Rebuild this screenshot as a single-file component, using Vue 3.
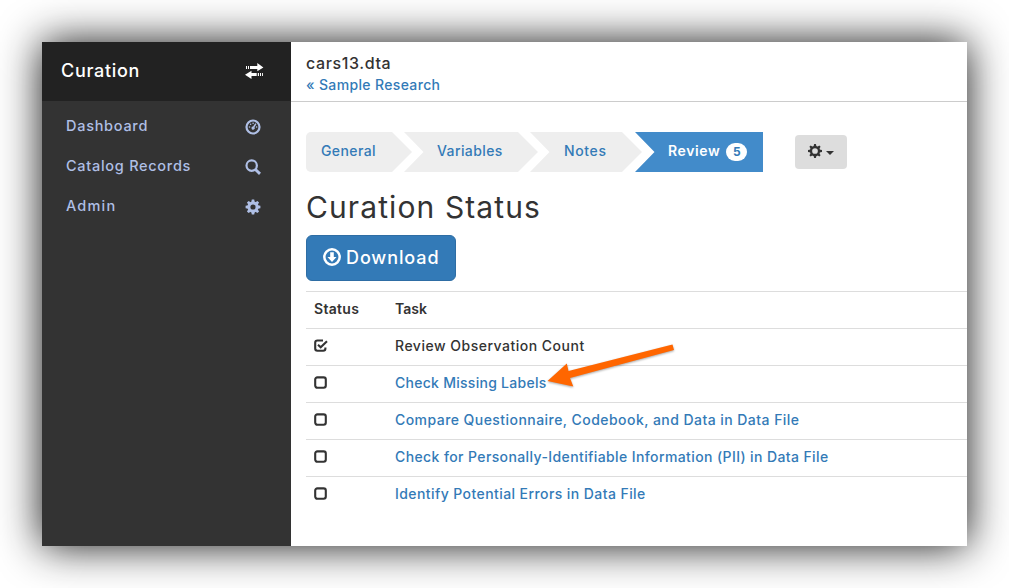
<script setup>
const nav = [
  { label: 'Dashboard', icon: 'dashboard', fit: 'f-dash' },
  { label: 'Catalog Records', icon: 'search', fit: 'f-cat' },
  { label: 'Admin', icon: 'cog', fit: 'f-admin' },
]
const steps = [
  { label: 'General', cls: 'general' },
  { label: 'Variables', cls: 'variables' },
  { label: 'Notes', cls: 'notes' },
  { label: 'Review', cls: 'review', count: 5 },
]
const tasks = [
  { label: 'Review Observation Count', done: true, fit: 't1' },
  { label: 'Check Missing Labels', fit: 't2' },
  { label: 'Compare Questionnaire, Codebook, and Data in Data File', fit: 't3' },
  { label: 'Check for Personally-Identifiable Information (PII) in Data File', fit: 't4' },
  { label: 'Identify Potential Errors in Data File', fit: 't5' },
]
const teeth = [0, 45, 90, 135, 180, 225, 270, 315]
</script>

<template>
  <div class="page">
    <div class="window">
      <aside class="sidebar">
        <div class="brand">
          <span class="brand-name">Curation</span>
          <svg class="transfer" width="19" height="16" viewBox="0 0 19 16">
            <path fill="#fff" d="M1 3h1v3H1zM3 3h1v3H3zM5 3h7.3V0L18.4 4.4 12.3 8.3V6H5zM6.5 7.7v2.4h5.2v3H6.5v2.8L0 11.7zM12.8 10.1H14v3h-1.2zM15 10.1h1v3h-1zM17 10.1h.9v3H17z" />
          </svg>
        </div>
        <nav>
          <a v-for="n in nav" :key="n.label" class="nav-item">
            <span :class="n.fit">{{ n.label }}</span>
            <svg width="16" height="16" viewBox="0 0 16 16">
              <g v-if="n.icon === 'dashboard'" fill="#afbfe5">
                <circle cx="8" cy="8" r="6.5" fill="none" stroke="#afbfe5" stroke-width="2.2" />
                <circle cx="4.5" cy="8" r=".8" /><circle cx="5.6" cy="5.3" r=".8" />
                <circle cx="8.1" cy="4.2" r=".8" /><circle cx="11.6" cy="8" r=".8" />
                <path d="M10.3 4.2l1.2.7-2 3.4a1.6 1.6 0 1 1-1.4-.8z" />
              </g>
              <g v-else-if="n.icon === 'search'" fill="none" stroke="#afbfe5">
                <circle cx="6.7" cy="6.6" r="5.2" stroke-width="2.2" />
                <path d="M10.2 10.3l4.8 4.6" stroke-width="2.9" />
              </g>
              <g v-else>
                <circle cx="8" cy="8" r="4.1" fill="none" stroke="#afbfe5" stroke-width="3" />
                <path v-for="t in teeth" :key="t" fill="#afbfe5" d="M6.2 3.4L6.8.6h2.4l.6 2.8z" :transform="`rotate(${t} 8 8)`" />
              </g>
            </svg>
          </a>
        </nav>
      </aside>
      <main>
        <header>
          <div class="file"><span>cars13.dta</span></div>
          <a class="back">« Sample Research</a>
        </header>
        <section class="content">
          <div class="toolbar">
            <div class="steps">
              <a v-for="s in steps" :key="s.label" class="step" :class="s.cls">
                <span>{{ s.label }}</span><b v-if="s.count" class="badge">{{ s.count }}</b>
              </a>
            </div>
            <button class="gear">
              <svg width="14" height="14" viewBox="0 0 14 14">
                <circle cx="7" cy="7" r="4" fill="none" stroke="#333" stroke-width="2.3" />
                <path v-for="t in teeth" :key="t" fill="#333" d="M5.6 2.6L6.1 0h1.8l.5 2.6z" :transform="`rotate(${t} 7 7)`" />
              </svg>
              <i class="caret"></i>
            </button>
          </div>
          <h1>Curation Status</h1>
          <button class="download">
            <svg width="18" height="18" viewBox="0 0 18 18">
              <circle cx="9" cy="9" r="7.7" fill="none" stroke="#fff" stroke-width="2.5" />
              <path d="M7.2 4.3h3.6v4.6h2.7L9 14 4.5 8.9h2.7z" fill="#fff" />
            </svg>
            <span>Download</span>
          </button>
          <div class="table">
            <div class="row head"><span class="c1"><span class="status">Status</span></span><span class="c2">Task</span></div>
            <div v-for="t in tasks" :key="t.label" class="row">
              <span class="c1">
                <svg width="14" height="14" viewBox="0 0 14 14" fill="none" stroke="#333" stroke-width="2.1">
                  <template v-if="t.done">
                    <path d="M9 1.5H3.4Q1.2 1.5 1.2 3.7v5.9q0 2.2 2.2 2.2h5.8q2.2 0 2.2-2.2V8.6" />
                    <path d="M4 5.7l2.7 2.6 6.3-6" />
                  </template>
                  <rect v-else x="1.2" y="1.4" width="10.6" height="10.4" rx="2.2" />
                </svg>
              </span>
              <span class="c2"><span :class="[t.fit, { link: !t.done }]">{{ t.label }}</span></span>
            </div>
          </div>
        </section>
      </main>
    </div>
    <svg class="pointer" width="140" height="56" viewBox="0 0 140 56">
      <path fill="#ff6600" d="M7.5 41L26.8 23.5 28.5 31 132.5 4.5 134 10 30 38 33.3 46.5z" />
    </svg>
  </div>
</template>

<style>
html, body { margin: 0; background: #fff; overflow: hidden; }
</style>
<style scoped>
.page { box-sizing: border-box; width: 1009px; height: 588px; padding: 42px; position: relative; overflow: hidden;
  font-family: Inter, "Open Sans", sans-serif; font-size: 14px; font-weight: 500; line-height: 20px; color: #333; white-space: nowrap; }
.window { width: 925px; height: 504px; display: flex; background: #fff; box-shadow: 0 0 40px rgba(0, 0, 0, .92); }
.sidebar { width: 249px; background: #333; }
.brand { height: 59px; box-sizing: border-box; background: #222; display: flex; align-items: center; justify-content: space-between; padding: 0 27px 1px 19px; color: #fff; }
.brand-name { font-size: 18px; letter-spacing: .7px; }
nav { padding-top: 5px; }
.nav-item { height: 40px; display: flex; align-items: center; justify-content: space-between; padding: 0 30px 0 24px; font-size: 14.5px; }
.nav-item svg { margin-top: 1px; }
.f-dash, .f-cat { letter-spacing: .72px; }
.f-admin { letter-spacing: 1.2px; }
main { flex: 1; min-width: 0; }
header { height: 60px; box-sizing: border-box; border-bottom: 1px solid #ccc; padding: 10px 15px 0; }
.file { font-size: 16px; line-height: 22px; letter-spacing: .6px; }
a, .link { color: #337ab7; }
.nav-item { color: #afbfe5; }
.back { display: block; line-height: 22px; letter-spacing: .35px; }
.content { padding: 30px 0 0 15px; }
.toolbar { display: flex; align-items: center; }
.steps { display: flex; height: 40px; }
.step { box-sizing: border-box; height: 40px; line-height: 38px; background: #eee; letter-spacing: .4px; }
.general { width: 106px; padding-left: 15px; border-radius: 5px 0 0 5px; clip-path: polygon(0 0, 86px 0, 100% 50%, 86px 100%, 0 100%); }
.variables { width: 134px; margin-left: -8px; padding-left: 33px; clip-path: polygon(0 0, 114px 0, 100% 50%, 114px 100%, 0 100%, 19.5px 50%); }
.notes { width: 112px; margin-left: -8px; padding-left: 34px; letter-spacing: .65px; clip-path: polygon(0 0, 92px 0, 100% 50%, 92px 100%, 0 100%, 19.5px 50%); }
.review { width: 128px; margin-left: -7px; padding-left: 33px; display: flex; align-items: center; background: #428bca; color: #fff; font-weight: 600; letter-spacing: .6px; clip-path: polygon(0 0, 100% 0, 100% 100%, 0 100%, 19.5px 50%); }
.review span { margin-top: -2px; }
.badge { width: 21px; height: 18px; line-height: 18px; border-radius: 9px; background: #fff; color: #337ab7; font-size: 12px; font-weight: 700; letter-spacing: 0; text-align: center; margin-left: 6px; }
.gear { margin-left: 32px; width: 52px; height: 34px; padding: 0 0 3px; border: 0; border-radius: 4px; background: #ddd; display: flex; align-items: center; justify-content: center; gap: 4px; }
.caret { border: 4px solid transparent; border-top-color: #333; border-bottom: 0; margin-top: 5px; }
h1 { margin: 19px 0 11px; font-size: 30px; font-weight: 400; line-height: 33px; letter-spacing: 1.1px; }
.download { width: 150px; height: 46px; box-sizing: border-box; display: flex; align-items: center; padding: 0 0 2px 16px; gap: 5px; background: #337ab7; border: 1px solid #2e6da4; border-radius: 6px; color: #fff; font: 500 18px Inter, sans-serif; letter-spacing: .9px; }
.table { margin-top: 10px; }
.row { height: 37px; box-sizing: border-box; border-top: 1px solid #ddd; display: flex; padding: 7px 8px 0; }
.head { font-weight: 600; }
.status { letter-spacing: .3px; }
.t1 { letter-spacing: .5px; }
.t2 { letter-spacing: .27px; }
.t3 { letter-spacing: .45px; }
.t4 { letter-spacing: .39px; }
.t5 { letter-spacing: .42px; }
.c1 { width: 81px; }
.c1 svg { display: block; margin-top: 3px; }
.pointer { position: absolute; left: 540px; top: 340px; filter: drop-shadow(0 1px 1px rgba(0, 0, 0, .35)); }
</style>
